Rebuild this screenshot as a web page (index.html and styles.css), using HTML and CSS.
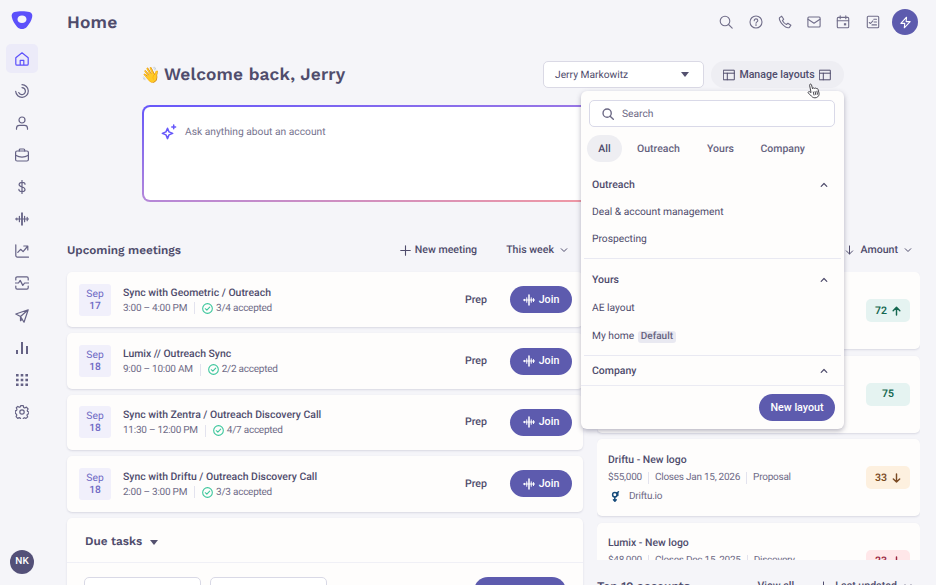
FILE: index.html
```html
<!DOCTYPE html>
<html lang="en">
<head>
    <meta charset="UTF-8">
    <meta name="viewport" content="width=device-width, initial-scale=1.0">
    <title>Home</title>
    <link rel="stylesheet" href="styles.css">
</head>
<body>

    <!-- Shared icons -->
    <svg class="sprite" width="0" height="0">
        <symbol id="i-wave" viewBox="0 0 14 14"><path d="M.4 7h13.200M1.800 6v2M4.400 4.300v5.400M9.600 4.300v5.400M12.200 5.300v3.400"/><path d="M7 1.200v11.600" stroke-width="1.800"/></symbol>
        <symbol id="i-down" viewBox="0 0 8 8"><path d="M1.200 2.700L4 5.500l2.800-2.800"/></symbol>
        <symbol id="i-up" viewBox="0 0 8 8"><path d="M1.200 5.300L4 2.500l2.800 2.800"/></symbol>
        <symbol id="i-layout" viewBox="0 0 12 12"><path d="M.7 1.2h10.600v9.600H.7zM.7 4.200h10.600M4.300 4.200v6.600"/></symbol>
        <symbol id="i-search" viewBox="0 0 14 14"><circle cx="6" cy="6" r="4.800"/><path d="M9.500 9.500l3.700 3.700"/></symbol>
        <symbol id="i-check" viewBox="0 0 10 10"><circle cx="5" cy="5" r="4.400"/><path d="M3 5.200l1.400 1.300 2.600-2.800"/></symbol>
        <symbol id="i-arrow-down" viewBox="0 0 10 10"><path d="M5 .5v9M1.500 6L5 9.500 8.500 6"/></symbol>
    </svg>

    <aside class="sidebar">
        <svg class="logo" viewBox="0 0 22 20"><path fill-rule="evenodd" d="M3.500 2C7.500.9 14.500.9 18.500 2c2.400.8 3.200 2.600 2.700 5-.8 3.700-2.700 6.900-5.400 9.900-2.900 2.800-6.700 2.800-9.600 0C3.500 13.900 1.600 10.700.8 7 .3 4.600 1.100 2.800 3.500 2zM11 5.400c-2.700 0-4.500 1.500-4.500 3.800s1.800 3.900 4.500 3.900 4.500-1.600 4.500-3.900-1.800-3.800-4.500-3.800z"/></svg>
        <nav class="side-nav">
            <a class="active"><svg viewBox="0 0 14 14"><path d="M.8 5.800L7 .8l6.200 5v6.100a1.300 1.300 0 0 1-1.300 1.300H2.100A1.300 1.300 0 0 1 .8 11.900zM5.200 13V8.300h3.600V13"/></svg></a>
            <a><svg viewBox="0 0 14 14"><path d="M7 .7A6.300 6.300 0 1 1 .7 7.400M7 3.600A3.500 3.500 0 1 1 3.700 8.600"/></svg></a>
            <a><svg viewBox="0 0 14 14"><circle cx="7" cy="4" r="3"/><path d="M1.500 13.200v-1a3 3 0 0 1 3-2.900h5a3 3 0 0 1 3 2.900v1"/></svg></a>
            <a><svg viewBox="0 0 14 14"><path d="M4.300 3V2a1 1 0 0 1 1-1h3.400a1 1 0 0 1 1 1v1M.6 7.300c4 2.300 8.800 2.300 12.800 0"/><rect x=".6" y="3" width="12.800" height="10" rx="1.500"/></svg></a>
            <a><svg viewBox="0 0 14 14"><path d="M7 .4v13.200M10 4.300c0-1.300-1.200-2-3-2s-2.900.9-2.900 2.200C4.100 7.700 10 6.200 10 9.500c0 1.400-1.200 2.200-3 2.200s-3.100-.8-3.100-2.300"/></svg></a>
            <a><svg><use href="#i-wave"/></svg></a>
            <a><svg viewBox="0 0 14 14"><path d="M.8.8v10.800a1.500 1.500 0 0 0 1.500 1.500h11.200M2.800 8.400L5.600 5.300l2.500 2.300 4.300-5.100M8.800 2h4v4"/></svg></a>
            <a><svg viewBox="0 0 14 14"><path d="M.8 4V2.200A1.300 1.300 0 0 1 2.100.9h9.800a1.300 1.300 0 0 1 1.300 1.300V4M.8 10v1.800a1.300 1.300 0 0 0 1.300 1.300h9.800a1.300 1.300 0 0 0 1.300-1.300V10M.3 7h3.200l1.700-2.600 2.600 5L9.600 7h4.100"/></svg></a>
            <a><svg viewBox="0 0 14 14"><path d="M13.200.8L.8 5l4.700 2.500L9 13.200zM13.200.8L5.500 7.500v4.200l1.800-1.600"/></svg></a>
            <a><svg class="thick" viewBox="0 0 14 14"><path d="M2 9v4M7 1v12M12 5v8"/></svg></a>
            <a><svg class="solid" viewBox="0 0 14 14"><path d="M1 1h2.600v2.600H1zM5.700 1h2.600v2.600H5.700zM10.400 1H13v2.600h-2.600zM1 5.700h2.600v2.600H1zM5.700 5.700h2.600v2.600H5.700zM10.400 5.700H13v2.600h-2.600zM1 10.400h2.600V13H1zM5.700 10.400h2.600V13H5.700zM10.400 10.400H13V13h-2.600z"/></svg></a>
            <a><svg viewBox="0 0 14 14"><path d="M5.700.7h2.600l.4 1.800 1 .5 1.700-.9 1.700 1.900-.9 1.500.4 1 1.200.4v1.800l-1.400.6-.4 1 .7 1.600-1.700 1.500-1.600-.7-1 .5-.3 1.300H5.700l-.4-1.400-1-.5-1.600.8-1.600-1.700.7-1.600-.4-.9L.3 8.300V5.900l1.300-.5.4-1-.7-1.600 1.500-1.400 1.500.9 1-.4z"/><circle cx="7" cy="7" r="2.200"/></svg></a>
        </nav>
        <div class="avatar">NK</div>
    </aside>

    <main class="page">
        <header class="topbar">
            <h1>Home</h1>
            <div class="tools">
                <svg><use href="#i-search"/></svg>
                <svg viewBox="0 0 14 14"><circle cx="7" cy="7" r="6"/><path d="M5.200 5.700C5.200 4.500 6 3.900 7 3.900s1.800.6 1.800 1.600C8.800 6.800 7 6.900 7 8.200M7 9.500v1"/></svg>
                <svg viewBox="0 0 14 14"><path d="M3.700 1.200L1.600 2.600c-.8 1.200.5 4.400 2.900 6.800s5.500 3.800 6.900 3l1.500-2.100-3-2-1.500 1.200C6.700 8.700 5.400 7.300 4.500 5.700l1.200-1.500z"/></svg>
                <svg viewBox="0 0 14 14"><rect x=".9" y="2" width="12.200" height="10" rx="1"/><path d="M1 4.300l6 3.900 6-3.900"/></svg>
                <svg viewBox="0 0 14 14"><rect x="1.300" y="2.400" width="11.400" height="10.400" rx="1"/><path d="M1.300 5.700h11.400M4.200.8v3M9.800.8v3"/><path class="fill" d="M7.900 8.200h2.300v2.200H7.900z"/></svg>
                <svg viewBox="0 0 14 14"><rect x="1.300" y="1.300" width="11.400" height="11.400" rx="1"/><path d="M3.300 7.500l1.200 1 2.400-2.700M7.800 4.200h2.700M8.200 7h2.300M6 9.900h4.500"/></svg>
                <button class="bolt"><svg viewBox="0 0 14 14"><path d="M8.100 1.300L2 8h4.200l-.5 4.700L12 6H7.700z"/></svg></button>
            </div>
        </header>

        <section class="welcome">
            <div class="welcome-row">
                <span class="hand">👋</span>
                <h2>Welcome back, Jerry</h2>
                <div class="select">Jerry Markowitz <i class="caret"></i></div>
                <div class="manage">
                    <button class="manage-btn"><svg><use href="#i-layout"/></svg>Manage layouts<svg><use href="#i-layout"/></svg></button>
                    <svg class="cursor" viewBox="0 0 14 16"><path d="M4 9.200L2.600 2.400C2.400.9 4.100.5 4.500 1.900l1 3.800c.2-1 1.500-1.100 1.900-.2.500-.8 1.500-.7 1.800.2.700-.6 1.600-.2 1.800.6l1 3.700c.4 2-.5 3.800-2.600 4.600-2 .6-3.800 0-5-1.500L1.300 10c-.7-1 .6-1.900 1.400-1.300z"/><path d="M6.300 9l.7 3M8.100 8.600l.7 3M9.900 8.200l.6 3"/></svg>

                    <div class="dropdown">
                        <div class="search"><svg><use href="#i-search"/></svg>Search</div>
                        <div class="tabs"><span class="tab active">All</span><span class="tab t-outreach">Outreach</span><span class="tab t-yours">Yours</span><span class="tab">Company</span></div>
                        <div class="group">
                            <h4>Outreach <svg><use href="#i-up"/></svg></h4>
                            <p>Deal &amp; account management</p>
                            <p>Prospecting</p>
                        </div>
                        <div class="group yours">
                            <h4>Yours <svg><use href="#i-up"/></svg></h4>
                            <p>AE layout</p>
                            <p>My home <span class="tag">Default</span></p>
                        </div>
                        <div class="group company">
                            <h4>Company <svg><use href="#i-up"/></svg></h4>
                        </div>
                        <div class="dropdown-foot"><button class="primary">New layout</button></div>
                    </div>
                </div>
            </div>
            <div class="ask">
                <svg viewBox="0 0 16 16"><path d="M6.500 4.200L8 7.900l3.700 1.500L8 10.900l-1.500 3.700L5 10.900 1.300 9.400 5 7.900zM12.700 1v3.800M10.800 2.900h3.800"/></svg>
                <span>Ask anything about an account</span>
            </div>
        </section>

        <div class="columns">
            <section class="left">
                <div class="section-head">
                    <h3>Upcoming meetings</h3>
                    <span class="new-meeting"><svg viewBox="0 0 12 12"><path d="M6 .8v10.400M.8 6h10.400"/></svg>New meeting</span>
                    <span class="week">This week <svg class="chev"><use href="#i-down"/></svg></span>
                </div>
                <div class="meeting">
                    <div class="date">Sep<b>17</b></div>
                    <div class="info"><h5>Sync with Geometric / Outreach</h5><p>3:00 – 4:00 PM <i class="sep"></i><svg><use href="#i-check"/></svg>3/4 accepted</p></div>
                    <span class="prep">Prep</span>
                    <button class="primary join"><svg><use href="#i-wave"/></svg>Join</button>
                </div>
                <div class="meeting">
                    <div class="date">Sep<b>18</b></div>
                    <div class="info"><h5>Lumix // Outreach Sync</h5><p>9:00 – 10:00 AM <i class="sep"></i><svg><use href="#i-check"/></svg>2/2 accepted</p></div>
                    <span class="prep">Prep</span>
                    <button class="primary join"><svg><use href="#i-wave"/></svg>Join</button>
                </div>
                <div class="meeting">
                    <div class="date">Sep<b>18</b></div>
                    <div class="info"><h5>Sync with Zentra / Outreach Discovery Call</h5><p>11:30 – 12:00 PM <i class="sep"></i><svg><use href="#i-check"/></svg>4/7 accepted</p></div>
                    <span class="prep">Prep</span>
                    <button class="primary join"><svg><use href="#i-wave"/></svg>Join</button>
                </div>
                <div class="meeting">
                    <div class="date">Sep<b>18</b></div>
                    <div class="info"><h5>Sync with Driftu / Outreach Discovery Call</h5><p>2:00 – 3:00 PM <i class="sep"></i><svg><use href="#i-check"/></svg>3/3 accepted</p></div>
                    <span class="prep">Prep</span>
                    <button class="primary join"><svg><use href="#i-wave"/></svg>Join</button>
                </div>
                <div class="tasks">
                    <h3>Due tasks <i class="caret"></i></h3>
                    <div class="filters"><div class="filter"></div><div class="filter"></div><button class="primary"></button></div>
                </div>
            </section>

            <section class="right">
                <div class="section-head sort"><svg class="arrow"><use href="#i-arrow-down"/></svg><span class="amount">Amount</span><svg class="chev"><use href="#i-down"/></svg></div>
                <div class="deals">
                    <div class="deal"><span class="score good">72 <svg viewBox="0 0 10 10"><path d="M5 9.500V1M1.300 4.600L5 .9l3.700 3.700"/></svg></span></div>
                    <div class="deal"><span class="score good">75</span></div>
                    <div class="deal">
                        <div class="deal-info">
                            <h5>Driftu - New logo</h5>
                            <p>$55,000 <i class="sep"></i>Closes Jan 15, 2026 <i class="sep"></i>Proposal</p>
                            <p class="site"><svg viewBox="0 0 8 11"><circle cx="3.300" cy="3.800" r="2.200"/><path d="M3.300 6.200v4M2 8.800l1.400 1.500 1.300-1.500M5.300 1.800l1.700-1M6.300 2v2.500"/></svg>Driftu.io</p>
                        </div>
                        <span class="score warn">33 <svg><use href="#i-arrow-down"/></svg></span>
                    </div>
                    <div class="deal">
                        <div class="deal-info">
                            <h5>Lumix - New logo</h5>
                            <p>$48,000 <i class="sep"></i>Closes Dec 15, 2025 <i class="sep"></i>Discovery</p>
                        </div>
                        <span class="score bad">23 <svg><use href="#i-arrow-down"/></svg></span>
                    </div>
                </div>
                <div class="accounts-head">
                    <h3>Top 10 accounts <i class="caret"></i></h3>
                    <span>View all</span>
                    <svg class="arrow"><use href="#i-arrow-down"/></svg>
                    <span class="updated">Last updated</span>
                    <svg class="chev"><use href="#i-down"/></svg>
                </div>
            </section>
        </div>
    </main>

</body>
</html>
```
FILE: styles.css
```css
* { box-sizing: border-box; }
body { margin: 0; height: 585px; overflow: hidden; display: flex; background: #f5f5f9; color: #4f4c6c; font: 400 10.250px/14px Roboto, sans-serif; text-rendering: geometricPrecision; }
h1, h2, h3, h4, h5, p { margin: 0; }
h1, h2, h3 { font-family: "Work Sans", Inter, sans-serif; font-weight: 600; }
button { border: 0; padding: 0; font: inherit; color: inherit; }
svg { fill: none; stroke: currentColor; stroke-width: 1.2; stroke-linecap: round; stroke-linejoin: round; flex: none; display: block; }
.sprite { position: absolute; }
.chev { width: 8px; height: 8px; stroke-width: 1; }
.arrow { width: 9px; height: 10px; stroke-width: 1.1; }
.caret { display: inline-block; border: 4px solid transparent; border-top: 5px solid #54516f; border-bottom: 0; }
.primary { background: #5d5bae; color: #fff; font-weight: 500; font-size: 10.700px; border-radius: 14px; }

/* Sidebar */
.sidebar { width: 44px; display: flex; flex-direction: column; align-items: center; padding: 10px 0 11px; color: #656285; }
.logo { width: 22px; height: 20px; fill: #5c50fb; stroke: none; }
.side-nav { margin-top: 14px; display: flex; flex-direction: column; gap: 3.150px; }
.side-nav a { width: 32px; height: 29px; border-radius: 5px; display: flex; align-items: center; justify-content: center; }
.side-nav a.active { background: #ecebf9; color: #5c50fb; }
.side-nav svg { width: 14px; height: 14px; }
.side-nav .thick { stroke-width: 2; stroke-linecap: butt; }
.side-nav .solid { fill: currentColor; stroke: none; }
.avatar { margin-top: auto; width: 24px; height: 24px; border-radius: 50%; background: #535078; color: #fff; font-weight: 500; font-size: 10px; line-height: 24px; text-align: center; }

/* Header */
.page { flex: 1; padding-left: 23px; }
.topbar { height: 44px; padding-right: 18px; display: flex; justify-content: space-between; align-items: center; }
h1 { font-size: 17.400px; letter-spacing: .2px; padding-top: 1px; }
.tools { display: flex; align-items: center; gap: 15.300px; color: #716e8a; }
.tools > svg { width: 14px; height: 14px; stroke-width: 1.1; }
.tools .fill { fill: currentColor; stroke: none; }
.bolt { width: 26px; height: 26px; margin-left: -3px; border-radius: 50%; background: #5d5bae; color: #fff; display: flex; align-items: center; justify-content: center; }
.bolt svg { width: 13px; height: 13px; }

/* Welcome */
.welcome { width: 702px; margin-left: 75px; padding-top: 17px; }
.welcome-row { display: flex; align-items: center; height: 27px; }
.hand { width: 19px; margin-left: -1px; font: 15.500px/18px "Noto Color Emoji", sans-serif; }
h2 { margin-left: 4px; padding-top: 1px; font-size: 17.300px; letter-spacing: .15px; white-space: nowrap; }
.select { margin-left: auto; width: 161px; height: 27px; padding: 0 14px 0 11px; border: 1px solid #dad9e5; border-radius: 5px; background: #fff; display: flex; align-items: center; justify-content: space-between; }
.manage { position: relative; margin-left: 7px; }
.manage-btn { width: 133px; height: 27px; padding-right: 1px; border-radius: 14px; background: #eeeef3; font-weight: 500; font-size: 10.600px; display: flex; align-items: center; justify-content: center; gap: 4px; white-space: nowrap; }
.manage-btn svg { width: 12px; height: 12px; stroke-width: 1; }
.cursor { position: absolute; z-index: 3; left: 96px; top: 22px; width: 14px; height: 16px; fill: #fff; stroke: #34333b; stroke-width: .9; }
.ask { height: 97px; margin-top: 17px; padding: 18px 17px; border: 2px solid transparent; border-radius: 8px; background: linear-gradient(#fff, #fff) padding-box, linear-gradient(to bottom right, #6657fa, #b286db 48%, #f69a9e 85%) border-box; display: flex; align-items: flex-start; gap: 8px; color: #77748f; }
.ask svg { width: 16px; height: 16px; margin-top: -1px; color: #6657fa; stroke-width: 1.5; }

/* Layouts dropdown */
.dropdown { position: absolute; z-index: 2; top: 30px; right: 0; width: 263px; height: 338px; border-radius: 6px; background: #fefdfc; box-shadow: 0 2px 5px rgba(50, 47, 80, .35); display: flex; flex-direction: column; }
.search { margin: 9px 9px 0 8px; height: 27px; flex: none; border: 1px solid #d9d9e8; border-radius: 5px; background: #fff; display: flex; align-items: center; padding-left: 12px; gap: 8px; color: #6b6884; }
.search svg { width: 12px; height: 12px; stroke-width: 1.6; }
.tabs { display: flex; margin: 8px 0 0 6px; font-weight: 500; font-size: 10.500px; color: #66637f; line-height: 27px; }
.tab.active { width: 35px; text-align: center; border-radius: 14px; background: #eeeef2; color: #4b4869; margin-right: 15px; }
.t-outreach { width: 70px; }
.t-yours { width: 53.500px; }
.group { margin: 0 3px; padding: 16px 8px 0 8px; height: 96px; }
.group h4 { display: flex; align-items: center; justify-content: space-between; padding-right: 5px; font: inherit; font-weight: 500; font-size: 10.500px; }
.group svg { width: 8px; height: 8px; }
.group p { margin-top: 13px; }
.yours { border-top: 1px solid #e9e9f2; padding-top: 14px; height: 97px; }
.yours p { margin-top: 14px; }
.company { border-top: 1px solid #e9e9f2; padding-top: 8px; height: 30px; }
.tag { display: inline-block; padding: 0 3px; margin-left: 1px; border-radius: 3px; background: #e9e9f1; color: #66637f; font-weight: 500; font-size: 10px; line-height: 12px; }
.dropdown-foot { flex: 1; border-top: 1px solid #ebebf3; padding: 8px 9px 0; display: flex; justify-content: flex-end; }
.dropdown-foot button { width: 76px; height: 27px; }

/* Content columns */
.columns { display: flex; gap: 14px; margin-top: 35px; }
.left { width: 516px; }
.right { width: 323px; }
.section-head { height: 26px; margin-bottom: 9px; display: flex; align-items: center; font-weight: 500; font-size: 10.600px; }
h3 { font-size: 11.750px; line-height: 16px; white-space: nowrap; }
.new-meeting { margin-left: auto; display: flex; align-items: center; gap: 4px; }
.new-meeting svg { width: 11px; height: 11px; }
.week { margin: 0 15px 0 29px; display: flex; align-items: center; gap: 6px; }
.meeting, .tasks, .deal { background: #fefdfc; border-radius: 5px; box-shadow: 0 1px 2px rgba(70, 68, 110, .16); }
.meeting { height: 55.400px; margin-bottom: 6px; padding: 0 11px 0 12px; display: flex; align-items: center; }
.date { width: 32px; height: 32px; padding-top: 4px; border-radius: 3px; background: #f1f0fb; color: #6e69c4; line-height: 12px; text-align: center; }
.date b { display: block; font-weight: 500; }
.info { margin-left: 12px; padding-top: 2px; flex: 1; }
h5 { font: 500 10.450px/15px Roboto, sans-serif; }
.info p, .deal p { display: flex; align-items: center; font-size: 10px; letter-spacing: -.25px; line-height: 16px; color: #6e6b87; }
.info p { line-height: 17px; }
.sep { width: 1px; height: 12px; background: #e3e3ee; margin: 0 7px; }
.info svg { width: 11px; height: 11px; margin-right: 3px; color: #3ec79d; stroke-width: 1; }
.prep { font-weight: 500; font-size: 10.600px; margin-right: 23px; }
.join { width: 62px; height: 27px; display: flex; align-items: center; justify-content: center; gap: 4px; }
.join svg { width: 12px; height: 12px; }
.tasks { height: 90px; }
.tasks h3 { height: 45px; padding: 15px 18px; border-bottom: 1px solid #f0f0f6; }
.tasks .caret { margin-left: 4px; }
.filters { display: flex; gap: 9px; padding: 14px 17px 0; }
.filter { width: 117px; height: 28px; border: 1px solid #d9d9e6; border-radius: 5px; background: #fff; }
.filters button { width: 92px; margin-left: auto; }

/* Deals */
.sort { justify-content: flex-end; padding-right: 8px; }
.sort .amount { margin: 0 6px 0 7px; }
.deals { height: 287.500px; overflow: hidden; }
.deal { height: 77px; margin-bottom: 6.500px; padding: 0 10px 0 11px; display: flex; }
.deal-info { padding-top: 12.500px; }
.deal p { line-height: 22px; }
.deal .site { line-height: 16px; }
.deal .sep { margin: 0 6px; }
.site svg { width: 9px; height: 11px; margin: 0 9px 0 3px; color: #164b7a; stroke-width: 1.5; }
.score { width: 44px; height: 23px; margin: 27px 0 0 auto; border-radius: 5px; display: flex; align-items: center; justify-content: center; gap: 5px; font-weight: 600; font-size: 10.500px; }
.score svg { width: 9px; height: 10px; stroke-width: 1.6; }
.good { background: #e5f3f1; color: #14674f; }
.warn { background: #fdf0df; color: #7b4a23; }
.bad { background: #ffe7e9; color: #9b2741; }
.accounts-head { margin-top: 18px; display: flex; align-items: center; padding-right: 8px; font-weight: 500; font-size: 10.600px; line-height: 16px; }
.accounts-head h3 { margin-right: auto; }
.accounts-head h3 .caret { margin-left: 4px; }
.accounts-head .arrow { margin: 0 7px 0 25px; }
.accounts-head .updated { margin-right: 7px; }
```
